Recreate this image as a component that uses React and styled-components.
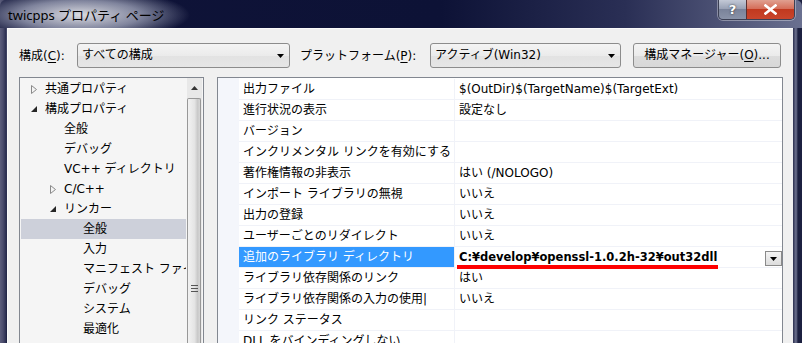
import React from "react";
import styled, { createGlobalStyle } from "styled-components";

const GlobalStyle = createGlobalStyle`
  html, body {
    margin: 0;
    padding: 0;
    background: #1a1e3c;
  }
  body {
    font-family: "DejaVu Sans", "Noto Sans CJK JP", sans-serif;
    font-size: 12px;
    line-height: 16px;
    color: #000;
  }
`;

const treeItems = [
  { label: "共通プロパティ", level: 0, arrow: "closed" },
  { label: "構成プロパティ", level: 0, arrow: "open" },
  { label: "全般", level: 1 },
  { label: "デバッグ", level: 1 },
  { label: "VC++ ディレクトリ", level: 1 },
  { label: "C/C++", level: 1, arrow: "closed" },
  { label: "リンカー", level: 1, arrow: "open" },
  { label: "全般", level: 2, selected: true },
  { label: "入力", level: 2 },
  { label: "マニフェスト ファイル", level: 2 },
  { label: "デバッグ", level: 2 },
  { label: "システム", level: 2 },
  { label: "最適化", level: 2 },
];

const props = [
  { name: "出力ファイル", value: "$(OutDir)$(TargetName)$(TargetExt)" },
  { name: "進行状況の表示", value: "設定なし" },
  { name: "バージョン", value: "" },
  { name: "インクリメンタル リンクを有効にする", value: "" },
  { name: "著作権情報の非表示", value: "はい (/NOLOGO)" },
  { name: "インポート ライブラリの無視", value: "いいえ" },
  { name: "出力の登録", value: "いいえ" },
  { name: "ユーザーごとのリダイレクト", value: "いいえ" },
  { name: "追加のライブラリ ディレクトリ", value: "C:¥develop¥openssl-1.0.2h-32¥out32dll", selected: true },
  { name: "ライブラリ依存関係のリンク", value: "はい" },
  { name: "ライブラリ依存関係の入力の使用|", value: "いいえ" },
  { name: "リンク ステータス", value: "" },
  { name: "DLL をバインディングしない", value: "" },
];

function DownArrow() {
  return (
    <svg width="7" height="4" viewBox="0 0 7 4">
      <path d="M0 0h7L3.5 4z" fill="#000" />
    </svg>
  );
}

function Expander({ open }) {
  if (open) {
    return (
      <svg width="6" height="6" viewBox="0 0 6 6">
        <path d="M6 0v6H0z" fill="#262626" />
      </svg>
    );
  }
  return (
    <svg width="6" height="9" viewBox="0 0 6 9">
      <path d="M0.5 0.5v8l5-4z" fill="none" stroke="#8a8a8a" strokeWidth="1" />
    </svg>
  );
}

function App() {
  return (
    <>
      <GlobalStyle />
      <Window>
        <TitleBar>
          <Title>twicpps プロパティ ページ</Title>
          <Captions>
            <CaptionButton>?</CaptionButton>
            <CaptionButton close>
              <svg width="13" height="11" viewBox="0 0 13 11">
                <path
                  d="M1.5 1.5l10 8M11.5 1.5l-10 8"
                  stroke="#fff"
                  strokeWidth="2.6"
                  strokeLinecap="square"
                />
              </svg>
            </CaptionButton>
          </Captions>
        </TitleBar>

        <Client>
          <Toolbar>
            <Label>
              構成(<u>C</u>):
            </Label>
            <Combo width={213}>
              <span>すべての構成</span>
              <DownArrow />
            </Combo>
            <Label gap={10}>
              プラットフォーム(<u>P</u>):
            </Label>
            <Combo width={191}>
              <span>アクティブ(Win32)</span>
              <DownArrow />
            </Combo>
            <PushButton>
              構成マネージャー(<u>O</u>)...
            </PushButton>
          </Toolbar>

          <Body>
            <Tree>
              <TreeList>
                {treeItems.map((item, i) => (
                  <TreeRow key={i} level={item.level} selected={item.selected}>
                    <ArrowSlot>
                      {item.arrow && <Expander open={item.arrow === "open"} />}
                    </ArrowSlot>
                    <TreeText>{item.label}</TreeText>
                  </TreeRow>
                ))}
              </TreeList>
              <ScrollBar>
                <ScrollUp>
                  <svg width="7" height="4" viewBox="0 0 7 4">
                    <path d="M0 4h7L3.5 0z" fill="#333" />
                  </svg>
                </ScrollUp>
                <Thumb>
                  <Grip />
                </Thumb>
              </ScrollBar>
            </Tree>

            <Grid>
              {props.map((p, i) => (
                <PropRow key={i}>
                  <Gutter />
                  <NameCell selected={p.selected}>{p.name}</NameCell>
                  <ValueCell selected={p.selected}>
                    <span>{p.value}</span>
                    {p.selected && (
                      <>
                        <RedMark />
                        <CellDrop>
                          <DownArrow />
                        </CellDrop>
                      </>
                    )}
                  </ValueCell>
                </PropRow>
              ))}
            </Grid>
          </Body>
        </Client>
      </Window>
    </>
  );
}

const Window = styled.div`
  width: 802px;
  height: 343px;
  overflow: hidden;
  display: flex;
  flex-direction: column;
  background: linear-gradient(
      to right,
      #5c5e7c 0,
      #4a4c6c 3px,
      #2a2e50 6px,
      transparent 7px,
      transparent 793px,
      #2a2e4e 793px,
      #6e7390 796px,
      #1c2040 798px
    ),
    linear-gradient(#6a6c88 0, #3a3d5e 120px, #161a38 343px);
`;

const TitleBar = styled.div`
  height: 28px;
  flex-shrink: 0;
  display: flex;
  justify-content: space-between;
  align-items: flex-start;
  border-radius: 6px 6px 0 0;
  background: radial-gradient(
      ellipse 110px 26px at 80px 15px,
      rgba(255, 255, 255, 0.85) 0,
      rgba(220, 225, 240, 0.55) 55%,
      rgba(255, 255, 255, 0) 100%
    ),
    linear-gradient(to right, #0f1338 0, #0d1236 55%, #2a2f55 78%, #6a7090 100%);
`;

const Title = styled.div`
  padding: 6px 0 0 8px;
  font-family: "Noto Sans", "Noto Sans CJK JP", sans-serif;
  font-size: 13px;
  line-height: 18px;
  color: #000;
`;

const Captions = styled.div`
  display: flex;
  margin-right: 7px;
  border: 1px solid #3c4054;
  border-top: none;
  border-radius: 0 0 5px 5px;
  overflow: hidden;
  box-shadow: 0 0 0 1px rgba(255, 255, 255, 0.35);
`;

const CaptionButton = styled.div`
  width: ${(p) => (p.close ? 47 : 27)}px;
  height: 19px;
  display: flex;
  align-items: center;
  justify-content: center;
  font-family: "DejaVu Sans", sans-serif;
  font-weight: bold;
  font-size: 13px;
  color: #fff;
  text-shadow: 0 0 2px #222;
  border-left: ${(p) => (p.close ? "1px solid #5a3030" : "none")};
  background: ${(p) =>
    p.close
      ? "linear-gradient(#e0a090 0, #d56f5a 45%, #c1391f 50%, #c9452c 100%)"
      : "linear-gradient(#c3c9d6 0, #9aa2b6 45%, #7a839a 50%, #8a93a8 100%)"};
`;

const Client = styled.div`
  flex: 1;
  margin: 0 9px 0 7px;
  padding: 14px 9px 0 11px;
  background: #f0f0f0;
  border-top: 1px solid #fafafa;
  border-left: 1px solid #fafafa;
  display: flex;
  flex-direction: column;
`;

const Toolbar = styled.div`
  display: flex;
  align-items: center;
  height: 25px;
`;

const Label = styled.div`
  margin: 0 ${(p) => (p.gap ? 10 : 9)}px 0 ${(p) => p.gap || 0}px;
  white-space: nowrap;
  width: ${(p) => (p.gap ? 120 : 49)}px;
  u {
    text-decoration: underline;
    text-underline-offset: 2px;
  }
`;

const Combo = styled.div`
  width: ${(p) => p.width}px;
  height: 25px;
  box-sizing: border-box;
  border: 1px solid #8c8c8c;
  border-radius: 3px;
  background: linear-gradient(#f4f4f4 0, #ebebeb 50%, #e2e2e2 51%, #e6e6e6 100%);
  display: flex;
  align-items: center;
  justify-content: space-between;
  padding: 0 5px 1px 4px;
  white-space: nowrap;
  svg {
    margin-top: 2px;
  }
`;

const PushButton = styled.div`
  margin-left: 12px;
  width: 148px;
  height: 25px;
  box-sizing: border-box;
  border: 1px solid #8c8c8c;
  border-radius: 3px;
  background: linear-gradient(#f4f4f4 0, #ebebeb 50%, #dddddd 51%, #d8d8d8 100%);
  display: flex;
  align-items: center;
  justify-content: center;
  padding-bottom: 1px;
  white-space: nowrap;
  u {
    text-underline-offset: 2px;
  }
`;

const Body = styled.div`
  flex: 1;
  display: flex;
  gap: 13px;
  margin-top: 9px;
  min-height: 0;
`;

const Tree = styled.div`
  width: 185px;
  box-sizing: border-box;
  border: 1px solid #828790;
  border-bottom: none;
  background: #f5f5f5;
  display: flex;
`;

const TreeList = styled.div`
  width: 166px;
  padding-top: 1px;
  overflow: hidden;
`;

const TreeRow = styled.div`
  height: 20px;
  margin-left: 1px;
  display: flex;
  align-items: center;
  padding-left: ${(p) => 10 + p.level * 19}px;
  padding-bottom: 1px;
  box-sizing: border-box;
  background: ${(p) => (p.selected ? "#cdd0da" : "transparent")};
  white-space: nowrap;
  overflow: hidden;
`;

const ArrowSlot = styled.span`
  width: 14px;
  flex-shrink: 0;
  display: flex;
  align-items: center;
  padding-top: 1px;
`;

const TreeText = styled.span`
  color: #000;
`;

const ScrollBar = styled.div`
  width: 15px;
  margin-left: 1px;
  background: #e8e8e8;
  display: flex;
  flex-direction: column;
`;

const ScrollUp = styled.div`
  height: 18px;
  display: flex;
  align-items: center;
  justify-content: center;
  padding-top: 1px;
`;

const Thumb = styled.div`
  flex: 1;
  margin: 1px 1px 0 0;
  border: 1px solid #989898;
  border-bottom: none;
  border-radius: 2px 2px 0 0;
  background: linear-gradient(to right, #f2f2f2 0, #e4e4e4 55%, #c9c9c9 80%, #d6d6d6 100%);
  display: flex;
  justify-content: center;
  padding-top: 186px;
`;

const Grip = styled.div`
  width: 7px;
  height: 7px;
  background: repeating-linear-gradient(#555 0 1px, transparent 1px 3px);
`;

const Grid = styled.div`
  width: 566px;
  box-sizing: border-box;
  border: 1px solid #828790;
  border-bottom: none;
  background: #fff;
  padding-top: 1px;
  overflow: hidden;
  background-image: linear-gradient(to right, #f4f6fb 0, #f4f6fb 21px, transparent 21px);
`;

const PropRow = styled.div`
  display: grid;
  grid-template-columns: 21px 216px 1fr;
  height: 21px;
  position: relative;
`;

const Gutter = styled.div``;

const NameCell = styled.div`
  display: flex;
  align-items: center;
  padding: 0 0 1px 4px;
  border-bottom: 1px solid #f0f2f8;
  border-right: 1px solid #f0f2f8;
  white-space: nowrap;
  overflow: hidden;
  background: ${(p) => (p.selected ? "#3399ff" : "transparent")};
  color: ${(p) => (p.selected ? "#fff" : "#000")};
`;

const ValueCell = styled.div`
  position: relative;
  display: flex;
  align-items: center;
  justify-content: space-between;
  padding: 0 0 1px 4px;
  border-bottom: 1px solid #f0f2f8;
  white-space: nowrap;
  font-weight: ${(p) => (p.selected ? "bold" : "normal")};
  font-size: ${(p) => (p.selected ? "11.5px" : "12px")};
`;

const CellDrop = styled.div`
  align-self: flex-end;
  width: 17px;
  height: 15px;
  box-sizing: border-box;
  margin-bottom: 0;
  border: 1px solid #8a8a8a;
  background: linear-gradient(#f4f4f4, #dcdcdc);
  display: flex;
  align-items: center;
  justify-content: center;
`;

const RedMark = styled.div`
  position: absolute;
  left: 2px;
  top: 18px;
  width: 261px;
  height: 4px;
  background: #ff0000;
  z-index: 2;
`;

export default App;
